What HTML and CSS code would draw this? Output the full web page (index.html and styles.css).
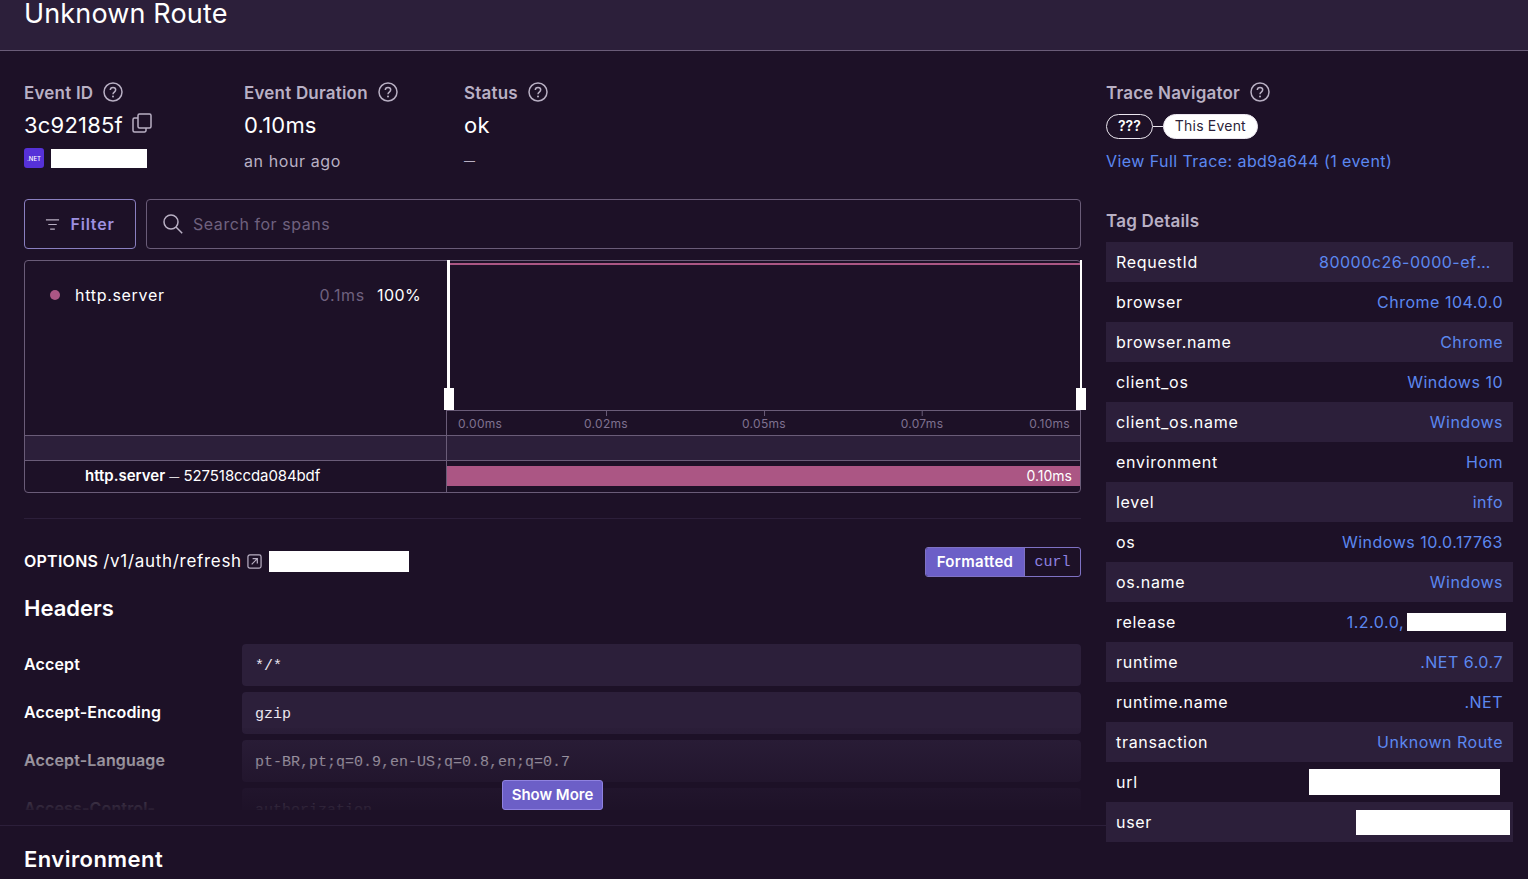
FILE: index.html
```html
<!DOCTYPE html>
<html lang="en">
<head>
<meta charset="utf-8">
<title>Unknown Route</title>
<link rel="stylesheet" href="styles.css">
</head>
<body>
<svg class="defs" aria-hidden="true"><defs>
<symbol id="q" viewBox="0 0 20 20"><circle cx="10" cy="10" r="9" fill="none" stroke="currentColor" stroke-width="1.5"/><path d="M7.3 8c0-1.6 1.2-2.6 2.7-2.6s2.7 1 2.7 2.4c0 2.3-2.7 2.2-2.7 4.4" fill="none" stroke="currentColor" stroke-width="1.5"/><circle cx="10" cy="14.6" r="1" fill="currentColor"/></symbol>
</defs></svg>
<header class="page-head"><h1 class="title">Unknown Route</h1></header>
<div class="layout">
  <main class="left">
    <section class="meta">
      <div class="meta-col">
        <div class="label">Event ID <svg class="q"><use href="#q"/></svg></div>
        <div class="value">3c92185f <svg class="copy" viewBox="0 0 20 20" fill="none" stroke="currentColor" stroke-width="1.5"><rect x="6" y="1" width="13" height="14" rx="1.5"/><path d="M6 5H2.500A1.500 1.500 0 0 0 1 6.500v11A1.500 1.500 0 0 0 2.500 19h10a1.500 1.500 0 0 0 1.500-1.500V15"/></svg></div>
        <div class="sub-row"><span class="net">.NET</span><span class="redact redact-project"></span></div>
      </div>
      <div class="meta-col">
        <div class="label">Event Duration <svg class="q"><use href="#q"/></svg></div>
        <div class="value">0.10ms</div>
        <div class="sub">an hour ago</div>
      </div>
      <div class="meta-col">
        <div class="label">Status <svg class="q"><use href="#q"/></svg></div>
        <div class="value">ok</div>
        <div class="sub"><span class="dash-sub">—</span></div>
      </div>
    </section>

    <section class="search-row">
      <button class="filter"><svg class="filter-ico" viewBox="0 0 16 16" fill="none" stroke="currentColor" stroke-width="1.300"><path d="M1 3h14M3.500 8h9M5.500 13h5"/></svg>Filter</button>
      <div class="search"><svg class="search-ico" viewBox="0 0 20 20" fill="none" stroke="currentColor" stroke-width="1.500"><circle cx="8" cy="8" r="7"/><path d="M13 13l6.200 6.200"/></svg><span>Search for spans</span></div>
    </section>

    <section class="minimap">
      <div class="mm-top">
        <div class="mm-legend">
          <span class="dot"></span><span class="op">http.server</span><span class="dur">0.1ms</span><span class="pct">100%</span>
        </div>
        <div class="mm-chart">
          <div class="mm-graph"><span class="mm-line"></span>
            <span class="handle handle-l"></span><span class="handle handle-r"></span>
          </div>
          <div class="axis">
            <span class="tick t0">0.00ms</span><span class="tick t1">0.02ms</span><span class="tick t2">0.05ms</span><span class="tick t3">0.07ms</span><span class="tick t4">0.10ms</span>
          </div>
        </div>
      </div>
      <div class="mm-strip"><span></span></div>
      <div class="mm-row">
        <div class="span-name"><b>http.server</b> <span class="dash-span">—</span> <span class="span-id">527518ccda084bdf</span></div>
        <div class="span-track"><div class="span-bar">0.10ms</div></div>
      </div>
    </section>

    <hr class="sep">

    <section class="req">
      <div class="req-line">
        <div class="req-title"><b>OPTIONS</b> <span class="req-path">/v1/auth/refresh</span> <svg class="open" viewBox="0 0 16 16" fill="none" stroke="currentColor" stroke-width="1.300"><rect x="1" y="1" width="14" height="14" rx="2"/><path d="M5 11l6-6M6 5h5v5"/></svg><span class="redact redact-url"></span></div>
        <div class="toggle"><span class="tg-on">Formatted</span><span class="tg-off">curl</span></div>
      </div>
      <h2 class="h2">Headers</h2>
      <div class="kv-wrap">
        <div class="kv"><div class="k">Accept</div><div class="v">*/*</div></div>
        <div class="kv"><div class="k">Accept-Encoding</div><div class="v">gzip</div></div>
        <div class="kv"><div class="k">Accept-Language</div><div class="v">pt-BR,pt;q=0.9,en-US;q=0.8,en;q=0.7</div></div>
        <div class="kv"><div class="k">Access-Control-Request-Headers</div><div class="v">authorization</div></div>
        <div class="fade"></div>
        <button class="more">Show More</button>
      </div>
    </section>

    <section class="env"><h2 class="h2">Environment</h2></section>
  </main>

  <aside class="right">
    <div class="label">Trace Navigator <svg class="q"><use href="#q"/></svg></div>
    <div class="nav"><span class="pill">???</span><span class="link-line"></span><span class="pill pill-on">This Event</span></div>
    <a class="trace-link">View Full Trace: abd9a644 (1 event)</a>
    <div class="label tag-h">Tag Details</div>
    <div class="tags">
      <div class="tag"><span>RequestId</span><a class="trunc">80000c26-0000-ef00-b63f-84710c7967bb</a></div>
      <div class="tag"><span>browser</span><a>Chrome 104.0.0</a></div>
      <div class="tag"><span>browser.name</span><a>Chrome</a></div>
      <div class="tag"><span>client_os</span><a>Windows 10</a></div>
      <div class="tag"><span>client_os.name</span><a>Windows</a></div>
      <div class="tag"><span>environment</span><a>Hom</a></div>
      <div class="tag"><span>level</span><a>info</a></div>
      <div class="tag"><span>os</span><a>Windows 10.0.17763</a></div>
      <div class="tag"><span>os.name</span><a>Windows</a></div>
      <div class="tag tag-rel"><span>release</span><a>1.2.0.0,<i class="redact redact-rel"></i></a></div>
      <div class="tag"><span>runtime</span><a>.NET 6.0.7</a></div>
      <div class="tag"><span>runtime.name</span><a>.NET</a></div>
      <div class="tag"><span>transaction</span><a>Unknown Route</a></div>
      <div class="tag tag-url"><span>url</span><i class="redact redact-u"></i></div>
      <div class="tag tag-user"><span>user</span><i class="redact redact-us"></i></div>
    </div>
  </aside>
</div>
</body>
</html>
```
FILE: styles.css
```css
* { box-sizing: border-box; }
html, body { margin: 0; height: 879px; overflow: hidden; }
body { background: #1d1127; color: #ebe6ef; font-family: Inter, "Noto Sans", sans-serif; font-size: 16px; }
.defs { display: none; }
.redact { display: inline-block; background: #fff; }

.page-head { height: 51px; background: #2c1f3a; border-bottom: 1px solid #6a5c78; padding: 0 24px; }
.title { margin: 0; font-size: 27px; line-height: 28px; font-weight: 400; color: #fff; letter-spacing: 0.15px; }

.layout { display: grid; grid-template-columns: 1106px 407px; }
.left { min-width: 0; }
.right { padding-top: 31px; min-width: 0; }

.meta { display: flex; padding: 31px 24px 0; height: 148px; }
.meta-col { width: 220px; }
.label { display: flex; align-items: center; gap: 10px; height: 20px; padding-top: 2px; font-weight: 600; color: #b9b0c4; font-size: 17px; letter-spacing: 0.2px; }
.q { width: 20px; height: 20px; color: #b9b0c4; margin-top: -2px; }
.value { display: flex; align-items: center; gap: 9px; margin-top: 11px; height: 24px; font-size: 22px; color: #fff; letter-spacing: 0.2px; }
.copy { width: 20px; height: 20px; color: #b9b0c4; margin-bottom: 4px; }
.sub { margin-top: 13px; height: 22px; color: #b9b0c4; font-size: 16px; line-height: 22px; letter-spacing: 0.6px; }
.dash-sub { font-size: 11px; letter-spacing: 0; vertical-align: 2px; }
.sub-row { display: flex; align-items: center; gap: 7px; margin-top: 10px; height: 22px; }
.net { width: 20px; height: 20px; border-radius: 3px; background: #5631d8; color: #fff; font-size: 6px; font-weight: 500; display: flex; align-items: center; justify-content: center; }
.redact-project { width: 96px; height: 19px; }

.search-row { display: flex; gap: 10px; padding: 0 25px 0 24px; height: 50px; }
.filter { width: 112px; display: flex; align-items: center; justify-content: center; gap: 10px; background: none; border: 1px solid #8a7fc0; border-radius: 4px; color: #9e90e0; font: 600 16px Inter, "Noto Sans", sans-serif; letter-spacing: 0.8px; }
.filter-ico { width: 15px; height: 15px; color: #b9b0c4; }
.search { flex: 1; display: flex; align-items: center; gap: 10px; padding-left: 16px; border: 1px solid #6a5c78; border-radius: 4px; color: #6f617f; font-size: 16px; letter-spacing: 0.55px; }
.search-ico { width: 20px; height: 20px; color: #b9b0c4; }

.minimap { margin: 11px 25px 0 24px; height: 233px; border: 1px solid #6a5c78; border-radius: 4px; display: flex; flex-direction: column; }
.mm-top { display: flex; height: 174px; }
.mm-legend { width: 421px; display: flex; align-items: flex-start; padding: 24px 25px 0 25px; line-height: 20px; }
.dot { width: 10px; height: 10px; border-radius: 50%; background: #ab5684; margin: 5px 15px 0 0; }
.op { flex: 1; color: #fff; letter-spacing: 0.7px; }
.dur { color: #6f617f; margin-right: 12px; letter-spacing: 0.7px; }
.pct { color: #fff; letter-spacing: 0.4px; }
.mm-chart { flex: 1; display: flex; flex-direction: column; }
.mm-graph { position: relative; height: 150px; border-bottom: 1px solid #6a5c78; }
.mm-line { position: absolute; left: 4px; right: 0; top: 2px; height: 2px; background: #ab5684; }
.handle { position: absolute; top: -1px; bottom: 0; background: #fff; }
.handle::after { content: ""; position: absolute; bottom: 0; width: 10px; height: 22px; background: #fff; }
.handle-l { left: 1px; width: 3px; }
.handle-l::after { left: -3px; }
.handle-r { right: -2px; width: 2px; }
.handle-r::after { left: -4px; }
.axis { position: relative; flex: 1; border-left: 1px solid #6a5c78; font-size: 12px; color: #7f7190; letter-spacing: 0.3px; }
.tick { position: absolute; top: 5px; line-height: 15px; }
.t0 { left: 11px; }
.t1, .t2, .t3 { transform: translateX(-50%); }
.t1::before, .t2::before, .t3::before { content: ""; position: absolute; left: 50%; top: -5px; width: 1px; height: 5px; background: #6a5c78; }
.t1 { left: 159px; }
.t2 { left: 317px; }
.t3 { left: 475px; }
.t4 { right: 10px; }
.mm-strip { height: 26px; background: #2c1f3a; border-top: 1px solid #6a5c78; border-bottom: 1px solid #6a5c78; }
.mm-strip span { display: block; margin-left: 421px; height: 100%; border-left: 1px solid #6a5c78; }
.mm-row { flex: 1; display: flex; }
.span-name { width: 421px; padding-left: 60px; line-height: 30px; font-size: 15px; color: #fff; white-space: nowrap; }
.span-name b { font-weight: 600; }
.dash-span { font-size: 10px; }
.span-id { letter-spacing: -0.1px; }
.span-track { flex: 1; border-left: 1px solid #6a5c78; padding-top: 5px; }
.span-bar { height: 20px; background: #ab5684; color: #fff; text-align: right; padding-right: 8px; font-size: 14px; line-height: 20px; }

.sep { margin: 25px 25px 0 24px; border: 0; border-top: 1px solid #2c1f3a; }
.req { padding: 0 25px 0 24px; }
.req-line { display: flex; align-items: center; justify-content: space-between; margin-top: 28px; height: 30px; }
.req-title { display: flex; align-items: center; gap: 5px; color: #fff; font-size: 16px; padding-bottom: 2px; }
.req-title b { font-weight: 600; letter-spacing: 0.25px; }
.req-path { font-size: 17px; letter-spacing: 0.7px; }
.open { width: 15px; height: 15px; color: #b9b0c4; }
.redact-url { width: 140px; height: 21px; margin-left: 2px; }
.toggle { display: flex; height: 30px; border: 1px solid #7f72c4; border-radius: 3px; overflow: hidden; }
.tg-on { width: 98px; background: #6c5fc7; color: #fff; font-weight: 600; font-size: 15px; letter-spacing: 0.3px; display: flex; align-items: center; justify-content: center; padding-bottom: 2px; }
.tg-off { width: 56px; border-left: 1px solid #7f72c4; color: #8f82e0; font: 15px "Liberation Mono", monospace; display: flex; align-items: center; justify-content: center; }
.h2 { margin: 0; font-size: 22px; line-height: 28px; font-weight: 600; color: #fff; }
.req .h2 { margin-top: 17px; }
.kv-wrap { position: relative; margin-top: 22px; height: 166px; overflow: hidden; }
.kv { display: grid; grid-template-columns: 218px 1fr; grid-template-rows: 42px; margin-bottom: 6px; }
.k { font-weight: 600; color: #fff; line-height: 40px; letter-spacing: 0.15px; padding-right: 40px; height: 42px; overflow: hidden; }
.v { background: #2c1f3a; border-radius: 4px; padding-left: 13px; font: 15px/46px "Liberation Mono", monospace; color: #ebe6ef; height: 42px; overflow: hidden; }
.fade { position: absolute; left: 0; right: 0; top: 84px; bottom: 0; background: linear-gradient(rgba(29,17,39,0.1), rgba(29,17,39,0.95)); }
.more { position: absolute; left: 478px; top: 136px; width: 101px; height: 30px; background: #6c5fc7; border: 1px solid #8f82e0; border-radius: 3px; color: #fff; font: 600 15px Inter, "Noto Sans", sans-serif; padding: 0 0 2px; }
.env { margin-top: 15px; padding: 19px 24px 0; border-top: 1px solid #2c1f3a; }
.env .h2 { letter-spacing: 0.45px; }

.nav { display: flex; align-items: center; margin-top: 12px; height: 25px; }
.pill { height: 25px; padding: 0 11px; border: 1px solid #ebe6ef; border-radius: 13px; font-size: 14px; line-height: 22px; font-weight: 600; color: #fff; }
.pill-on { background: #fff; color: #2c1f3a; font-weight: 400; padding: 0 11px; letter-spacing: 0.2px; }
.link-line { width: 10px; height: 1px; background: #ebe6ef; }
.trace-link { display: block; margin-top: 11px; color: #5c88f0; line-height: 22px; white-space: nowrap; letter-spacing: 0.43px; }
.tag-h { margin-top: 38px; }
.tags { margin-top: 12px; }
.tag { display: flex; align-items: center; justify-content: space-between; height: 40px; padding: 0 10px; }
.tag:nth-child(odd) { background: #2c1f3a; }
.tag span { color: #fff; letter-spacing: 0.7px; }
.tag a { color: #5c88f0; white-space: nowrap; display: flex; align-items: center; letter-spacing: 0.5px; }
.tag .trunc { display: block; width: 175px; margin-right: 9px; overflow: hidden; text-overflow: ellipsis; }
.redact-rel { width: 99px; height: 18px; margin: 0 -3px 0 3px; }
.redact-u { width: 191px; height: 26px; margin-right: 3px; }
.redact-us { width: 154px; height: 25px; margin-right: -7px; }
```
